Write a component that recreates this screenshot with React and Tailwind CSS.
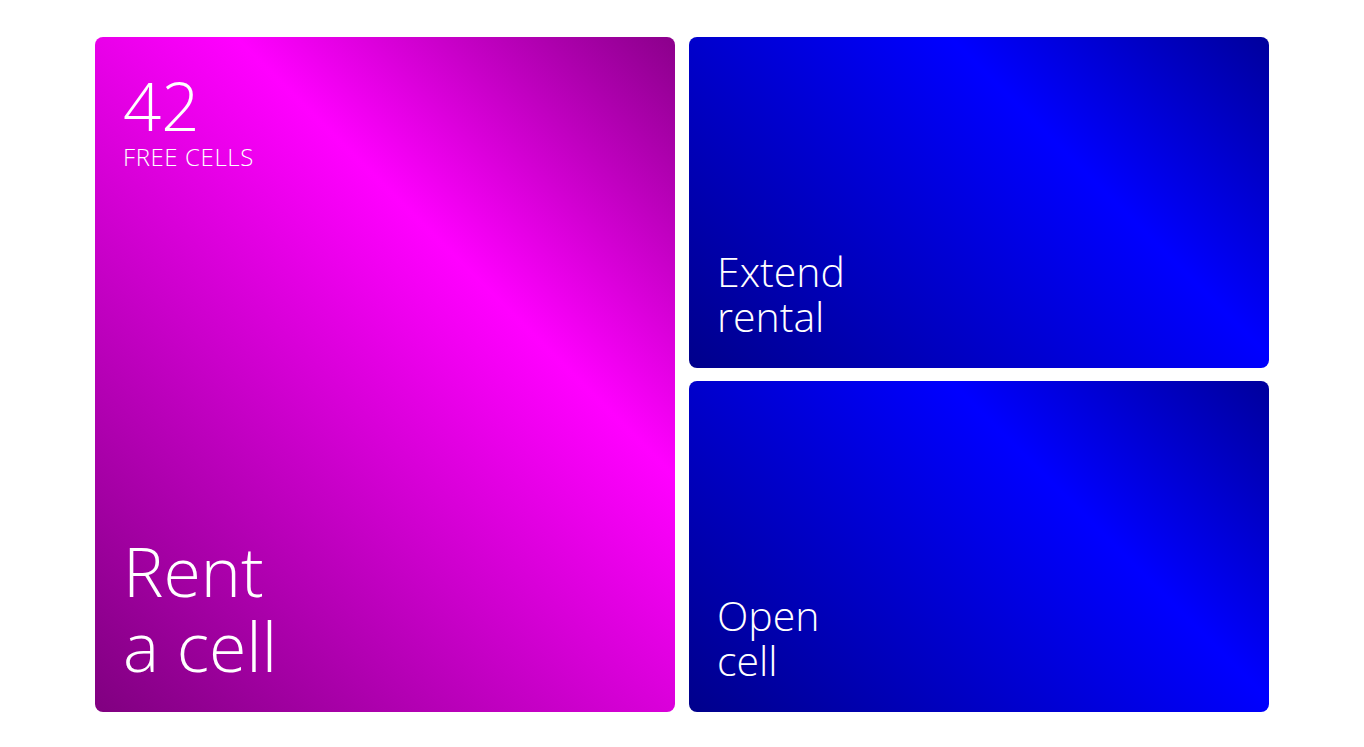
import React from "react";

// Tiles: one tall magenta tile on the left, two blue ones stacked on the right
const App = () => {
  return (
    <div className="w-full min-h-screen bg-white flex justify-center pt-[37px] font-['Open_Sans',sans-serif] font-light text-white">
      <div className="grid grid-cols-2 gap-x-[14px] w-[1174px] h-[675px]">
        <div className="rounded-lg bg-[linear-gradient(45deg,#800080_0%,#ff00ff_65%,#8b008b_100%)] flex flex-col justify-between px-[28px] pt-[34px] pb-[29px]">
          <div>
            <div className="text-[67px] leading-[68px]">42</div>
            <div className="text-[24px] leading-[26px] tracking-[0.6px] mt-[5px]">FREE CELLS</div>
          </div>
          <div className="text-[68px] leading-[75px]">
            <div>Rent</div>
            <div>a cell</div>
          </div>
        </div>

        <div className="flex flex-col gap-[13px]">
          <div className="flex-1 rounded-lg bg-[linear-gradient(45deg,#00008b_0%,#0000ff_65%,#00009c_100%)] flex flex-col justify-end px-[28px] pb-[29px]">
            <div className="text-[41px] leading-[45px]">
              <div>Extend</div>
              <div>rental</div>
            </div>
          </div>
          <div className="flex-1 rounded-lg bg-[linear-gradient(45deg,#00008b_0%,#0000ff_65%,#00009c_100%)] flex flex-col justify-end px-[28px] pb-[29px]">
            <div className="text-[41px] leading-[45px]">
              <div>Open</div>
              <div>cell</div>
            </div>
          </div>
        </div>
      </div>
    </div>
  );
};

export default App;
